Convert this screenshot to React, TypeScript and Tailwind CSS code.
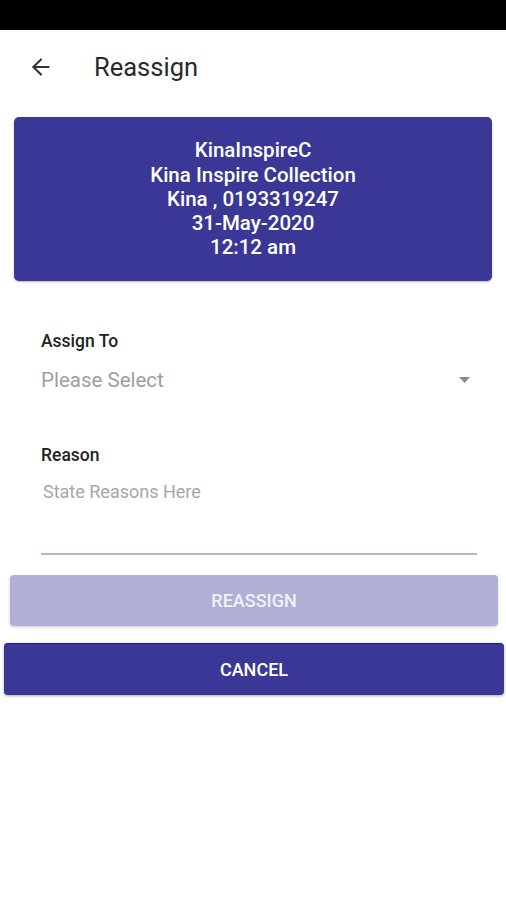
import { ArrowLeft } from "lucide-react";

export default function App() {
  return (
    <div className="flex min-h-[900px] w-[506px] flex-col bg-white font-['Roboto',sans-serif]">
      <div className="h-[30px] bg-black" />

      <header className="flex h-[74px] items-center">
        <button className="ml-[28px] flex h-[26px] w-[26px] items-center justify-center text-[#333]">
          <ArrowLeft size={26} strokeWidth={1.9} />
        </button>
        <h1 className="ml-[40px] text-[25.5px] text-[#2a2a2a]">Reassign</h1>
      </header>

      <div className="mx-[14px] mt-[13px] flex h-[164px] flex-col items-center justify-center rounded-[5px] bg-[#3a3796] text-[20.5px] font-medium leading-[24.3px] text-white shadow-[0_1px_2px_rgba(0,0,0,0.3)]">
        <span>KinaInspireC</span>
        <span>Kina Inspire Collection</span>
        <span>Kina , 0193319247</span>
        <span>31-May-2020</span>
        <span>12:12 am</span>
      </div>

      <div className="ml-[41px] mr-[29px] mt-[50px] flex flex-col">
        <label className="text-[17.5px] font-medium leading-[20px] text-[#222]">Assign To</label>
        <div className="mt-[17px] flex items-center justify-between pr-[7px]">
          <span className="text-[20.5px] leading-[24px] text-[#9e9e9e]">Please Select</span>
          <svg width="11" height="6" viewBox="0 0 11 6">
            <path d="M0 0h11L5.5 6z" fill="#8a8a8a" />
          </svg>
        </div>

        <label className="mt-[53px] text-[17.5px] font-medium leading-[20px] text-[#222]">Reason</label>
        <div className="mt-[16px] h-[74px] border-b-[2px] border-[#b3b1d8] pl-[2px]">
          <span className="text-[18px] leading-[22px] text-[#a6a6a6]">State Reasons Here</span>
        </div>
      </div>

      <button className="ml-[10px] mr-[8px] mt-[20px] flex h-[51px] items-center justify-center rounded-[4px] bg-[#b0afd6] text-[18px] font-medium text-[#f1f1f8] shadow-[0_1px_3px_rgba(0,0,0,0.2)]">
        REASSIGN
      </button>

      <button className="ml-[4px] mr-[2px] mt-[17px] flex h-[52px] items-center justify-center rounded-[4px] border-t border-[#1c1a8a] bg-[#3a3796] text-[18px] font-medium text-white shadow-[0_1px_3px_rgba(0,0,0,0.35)]">
        CANCEL
      </button>
    </div>
  );
}
